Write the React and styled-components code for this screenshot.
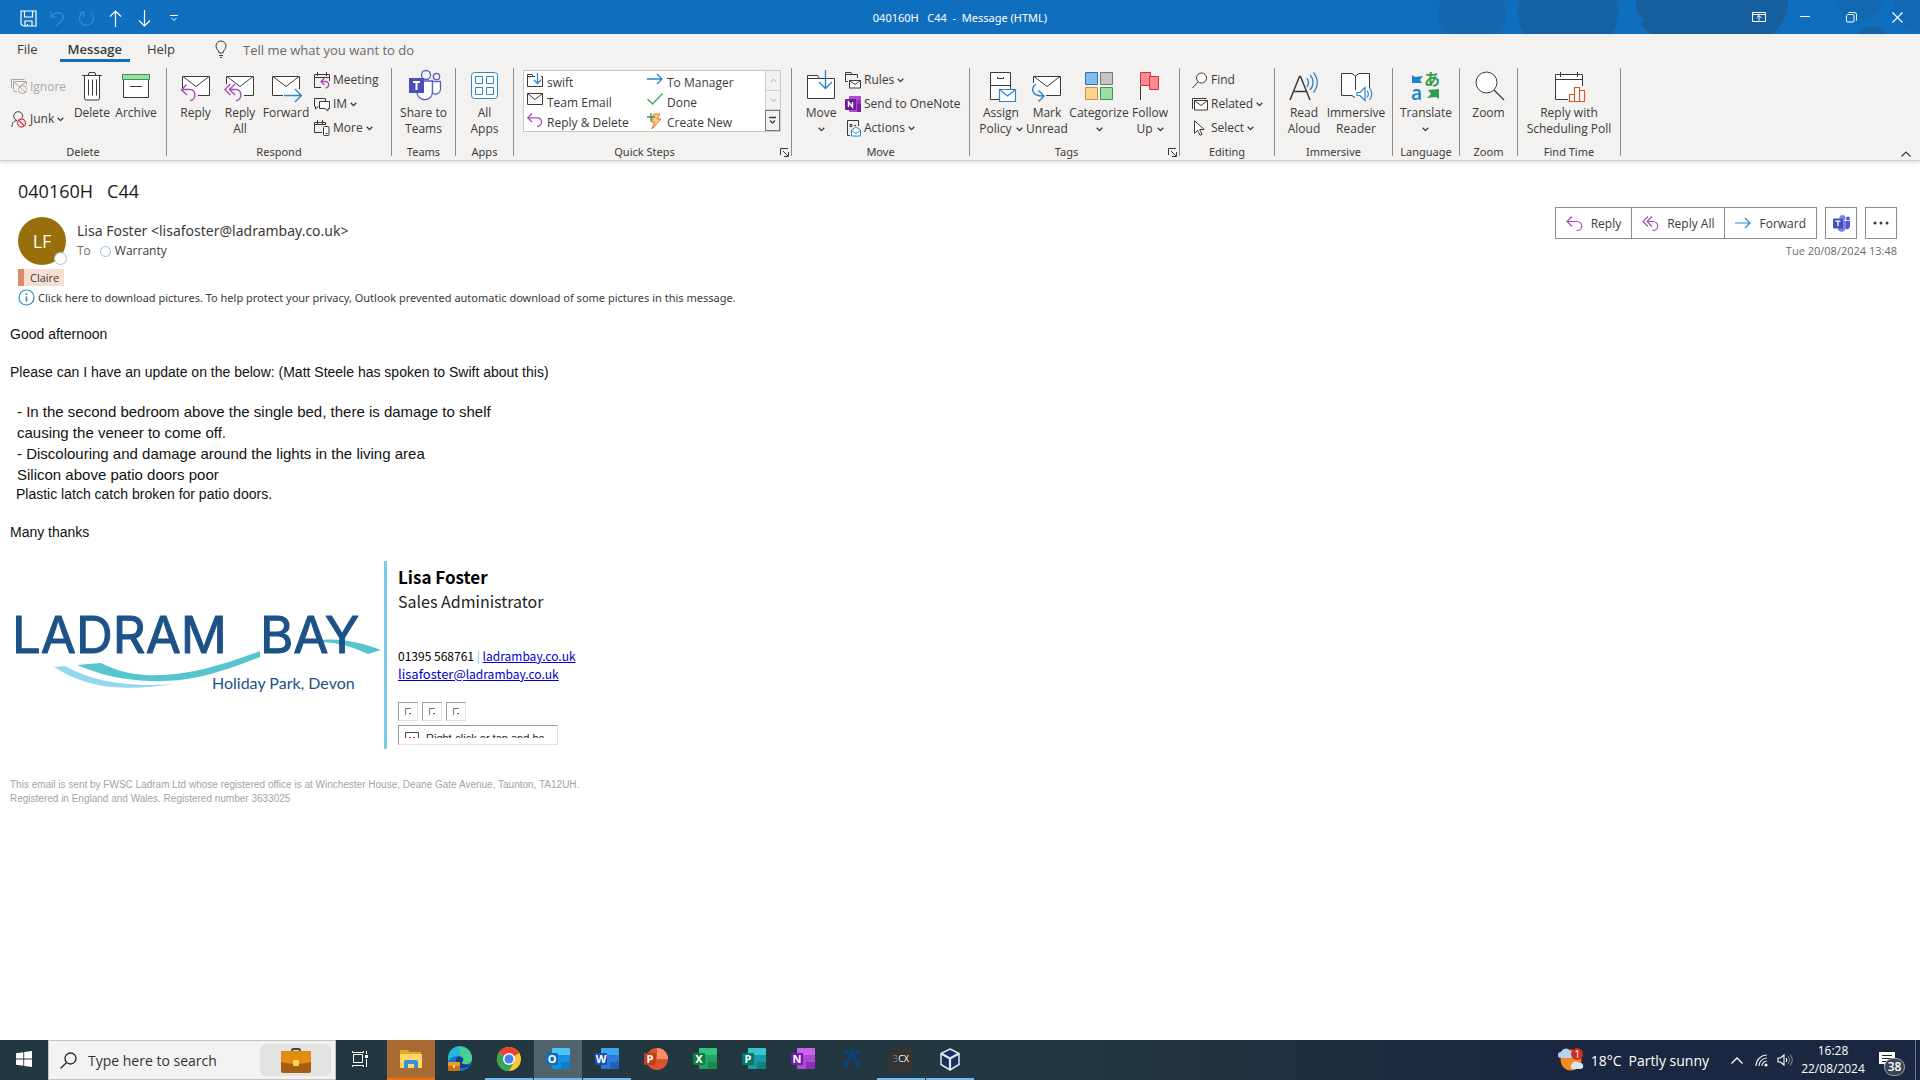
import React from 'react';
import styled, { createGlobalStyle, css } from 'styled-components';

const ui = '"Open Sans", "Noto Sans", sans-serif';
const uiSmall = '"Noto Sans", "Open Sans", sans-serif';
const mail = '"Liberation Sans", Arial, sans-serif';
const sign = '"Noto Sans CJK SC", "Noto Sans", sans-serif';

const Global = createGlobalStyle`
  *, *::before, *::after { box-sizing: border-box; }
  body { margin: 0; background: #fff; color: #3b3a39; font-family: ${ui}; font-size: 12px; }
  button, input { font: inherit; color: inherit; }
  button { background: none; border: 0; padding: 0; margin: 0; cursor: pointer; }
  p, h1, h2 { margin: 0; font-weight: 400; }
  svg { display: block; flex: none; overflow: visible; }
`;

const Window = styled.div`
  display: flex;
  flex-direction: column;
  min-height: 100vh;
`;

/* ---------- icons ---------- */

const ink = '#3b3a39';
const purple = '#a74db5';
const blue = '#2f86c9';

const Icon = ({ w = 16, h = w, box, children, stroke = ink, fill = 'none', sw = 1 }) => (
  <svg width={w} height={h} viewBox={box || `0 0 ${w} ${h}`} fill={fill} stroke={stroke} strokeWidth={sw} aria-hidden="true">
    {children}
  </svg>
);

const Chevron = () => (
  <Icon w={7} h={5} sw={1.3}><path d="M.7.8l2.8 2.8L6.3.8" /></Icon>
);

const icons = {
  save: <Icon w={17} stroke="#fff" sw={1.2}><path d="M1 1h15v15H3l-2-2zM4.500 1v6h8V1M5 16v-5h7v5M7.500 16v-2" /></Icon>,
  undo: <Icon w={17} stroke="#3c8bd0" sw={1.2}><path d="M2 1v6h6M2 7c3-4 8-6 11-3s1 6-6 12" /></Icon>,
  redo: <Icon w={17} stroke="#3c8bd0" sw={1.2}><path d="M1 2h5v5M13 3a7 7 0 1 1-9 0l2-1" /></Icon>,
  up: <Icon w={13} h={17} stroke="#fff" sw={1.2}><path d="M6.500 17V1M1 6.500L6.500 1 12 6.500" /></Icon>,
  down: <Icon w={13} h={17} stroke="#fff" sw={1.2}><path d="M6.500 0v16M1 10.500L6.500 16 12 10.500" /></Icon>,
  more: <Icon w={8} h={7} stroke="#fff"><path d="M0 .5h8M1.500 3L4 5.500 6.500 3" /></Icon>,
  popout: <Icon w={14} h={12} stroke="#fff"><path d="M.5 1.500h13v9H.500zM.5 3.500h13M7 9.500v-5M4.700 6.800L7 4.500l2.300 2.300" /></Icon>,
  min: <Icon w={10} stroke="#fff"><path d="M0 4.500h10" /></Icon>,
  restore: <Icon w={11} stroke="#fff"><rect x=".5" y="2.500" width="7.500" height="7.500" rx="1" /><path d="M2.500.5h6a2 2 0 0 1 2 2v6" /></Icon>,
  close: <Icon w={11} stroke="#fff" sw={1.1}><path d="M.5.5l10 10M10.500.5l-10 10" /></Icon>,
  bulb: <Icon w={12} h={17}><path d="M4 12c0-3-3-3.500-3-7a5 5 0 0 1 10 0c0 3.500-3 4-3 7zM4 14.500h4M5 16.500h2" /></Icon>,

  ignore: <Icon w={16} stroke="#a9a7a5"><path d="M2.500 11V2.500h13V6M.5 9V.5h13M2.500 3l6 4.500L15 3M2.500 12.500H6" /><circle cx="11.500" cy="10.500" r="4" /><path d="M8.700 7.700l5.600 5.600" /></Icon>,
  junk: <Icon w={16} h={17}><path d="M1 16c0-4 2-6.500 5-6.500A4.500 4.500 0 1 1 11.500 6.500" /><circle cx="10.500" cy="12" r="4" stroke="#d9434f" strokeWidth="1.300" /><path d="M7.700 9.200l5.600 5.600" stroke="#d9434f" strokeWidth="1.300" /></Icon>,
  trash: <Icon w={32}><path d="M8.500 5.500h15V28a2 2 0 0 1-2 2h-11a2 2 0 0 1-2-2z" fill="#fff" /><path d="M6 5.500h20M12.500 5.500V4a1.500 1.500 0 0 1 1.500-1.500h4A1.500 1.500 0 0 1 19.500 4v1.500M12.500 9.500v16M16.500 9.500v16M20.500 9.500v16" /></Icon>,
  archive: <Icon w={32}><path d="M3.500 9.500h25v18h-25z" fill="#fff" /><path d="M2.500 4.500h27v5h-27z" fill="#9bdfa8" stroke="#3d9650" /><path d="M10 16.500h12" /></Icon>,
  reply: <Icon w={32}><path d="M2.500 19V6.500h27v19H18" fill="#fff" /><path d="M3 6.500l13 10 13-10" /><path d="M6.500 14.500L1.500 20l5.500 5M2 19.500h8c7 0 6 11 0 11" stroke={purple} strokeWidth="1.400" /></Icon>,
  replyAll: <Icon w={32}><path d="M2.500 14V6.500h27v19H20" fill="#fff" /><path d="M3 6.500l13 10 13-10" /><path d="M6.500 14L1 19.500 6.500 25M11 14l-5.500 5.500L11 25M6 19.500h6c7 0 6 11 0 11" stroke={purple} strokeWidth="1.400" /></Icon>,
  forward: <Icon w={32}><path d="M2.500 25.500v-19h27v15l-2 4z" fill="#fff" stroke="none" /><path d="M13 25.500H2.500v-19h27V19M3 6.500l13 10 13-10" /><path d="M14 25.500h17M25 19l6.300 6.500L25 32" stroke={blue} strokeWidth="1.400" /></Icon>,
  meeting: <Icon w={16} h={17}><path d="M.5 15.500v-13h15V9M.5 5.500h15M3.500 0v4M12.500 0v4M.5 15.500H7" /><path d="M10.500 6L7 9.500l3.500 3.500M7.500 9.500h4c4.500 0 4 6 0 6.500" stroke={purple} strokeWidth="1.300" /></Icon>,
  im: <Icon w={16} h={15}><path d="M5.500 9.500H4.500L1.500 12V9.500h-1v-8h11v3" /><path d="M5.500 4.500h10v7h-1.500V14l-3-2.500H5.500z" fill="#fff" /></Icon>,
  moreSmall: <Icon w={16} h={16}><path d="M8 12.500H.5v-10h11V5M.5 4.500h11M3.500 0v4M8.500 0v4" /><rect x="9.500" y="6.500" width="5.500" height="9" rx="1" fill="#fff" /><path d="M11.500 13.500h2" /></Icon>,
  teams: (
    <Icon w={32} stroke="#5b5fc7" sw={1.3}>
      <circle cx="18" cy="5" r="4.500" /><circle cx="28.500" cy="6.500" r="3.200" />
      <path d="M9 11h15.500v11a7.600 7.600 0 0 1-15.500 0z" fill="#fff" /><path d="M24.500 11.500h8v8a5 5 0 0 1-8 3.500z" fill="#fff" />
      <rect x="1" y="8" width="15" height="15" fill="#4b50b8" stroke="none" /><path d="M5 12h7M8.500 12v8" stroke="#fff" strokeWidth="2" />
    </Icon>
  ),
  apps: <Icon w={32} stroke={blue}><rect x="2.500" y="2.500" width="26" height="26" rx="3" fill="#fff" /><path d="M6.500 6.500h7v7h-7zM17.500 6.500h7v7h-7zM6.500 17.500h7v7h-7zM17.500 17.500h7v7h-7z" /></Icon>,
  qFolder: <Icon w={16} h={16}><path d="M8 3.500H6l-1-2H.5v12h15v-10H14M.5 3.500H6" /><path d="M10.500 0v10M7 7l3.500 3.500L14 7" stroke={blue} strokeWidth="1.300" /></Icon>,
  qMail: <Icon w={16} h={12}><path d="M.5.5h15v11H.500z" fill="#fff" /><path d="M.5.5L8 6.500l7.500-6" /></Icon>,
  qReply: <Icon w={16} h={14} stroke={purple} sw={1.3}><path d="M5 .5L.8 4.800 5 9M1 4.800h9c6 0 6 8.500 0 8.500" /></Icon>,
  qArrow: <Icon w={16} h={12} stroke={blue} sw={1.3}><path d="M0 6h15M10 1l5 5-5 5" /></Icon>,
  qCheck: <Icon w={16} h={12} stroke="#4aa564" sw={1.4}><path d="M.5 6l5 5L15.500.5" /></Icon>,
  qNew: <Icon w={16} h={17} stroke="#e07b1f"><path d="M7 1h6l-3 5h4L5 16l2.500-7H4z" fill="#fbc78d" /><path d="M4 0v8M0 4h8" stroke="#3d9650" strokeWidth="1.300" /></Icon>,
  scrollUp: <Icon w={7} h={5} stroke="#a9a7a5"><path d="M.7 4l2.800-2.800L6.300 4" /></Icon>,
  scrollDown: <Icon w={7} h={5} stroke="#a9a7a5"><path d="M.7.8l2.800 2.800L6.300.8" /></Icon>,
  scrollMore: <Icon w={7} h={8}><path d="M0 .5h7M1 3.500L3.500 6 6 3.500" strokeWidth="1.300" /></Icon>,
  launcher: <Icon w={9}><path d="M.5 7V.5H8M3 3l5 5M8.500 4v4.500H4" /></Icon>,
  move: <Icon w={32}><path d="M2.500 28.500V5.500h10l2 3h15v20z" fill="#fff" /><path d="M2.500 8.500h12" /><path d="M20.500 0v18M14 12l6.500 6.500L27 12" stroke={blue} strokeWidth="1.400" /></Icon>,
  rules: <Icon w={16} h={17}><path d="M3 9.500H.5v-9H6l1 2h5.500V6M.5 2.500H7" /><path d="M4.500 8.500h11v7.500h-11z" fill="#fff" /><path d="M4.500 8.500L10 12.500l5.500-4" /></Icon>,
  onenote: <Icon w={16} stroke="none"><rect x="4" width="12" height="16" rx="1" fill="#ae4bd5" /><path d="M12 4h4v4h-4z" fill="#9332bf" /><path d="M12 8h4v8h-4z" fill="#7719aa" /><rect y="3" width="11" height="11" rx="1" fill="#6b1a9b" /><path d="M3.500 11V6l4 5V6" stroke="#fff" strokeWidth="1.400" /></Icon>,
  actions: <Icon w={16} h={17}><path d="M5 15.500H2.500V.5h11V6" /><path d="M5 4.500h2v2H5zM9 5.500h2" /><path d="M6.500 10l4.500-3 4.500 3v6h-9z" fill="#fff" stroke={blue} /><path d="M6.500 10.500L11 13.500l4.500-3" stroke={blue} /></Icon>,
  policy: <Icon w={32}><path d="M5.500 2.500h20v27h-20z" fill="#fff" /><path d="M5.500 15.500h20M12.500 7v1.500h6V7" /><path d="M14.500 19.500h16v12h-16z" fill="#fff" stroke={blue} strokeWidth="1.200" /><path d="M14.500 19.500l8 6.500 8-6.500" stroke={blue} strokeWidth="1.200" /></Icon>,
  unread: <Icon w={32}><path d="M2.500 6.500h27v19H13L2.500 14z" fill="#fff" stroke="none" /><path d="M2.500 13V6.500h27v19H15M3 6.500l13 10 13-10" /><path d="M5 14c-6 5-4 12 7 12M7.500 20.500l5.500 5.500-5.500 5.500" stroke={blue} strokeWidth="1.400" /></Icon>,
  categorize: <Icon w={32}><path d="M2.500 2.500h12v12h-12z" fill="#83bdee" stroke="#1f74bd" /><path d="M17.500 2.500h12v12h-12z" fill="#c6c5c4" stroke="#7a7876" /><path d="M2.500 17.500h12v12h-12z" fill="#fbd58d" stroke="#d98e2b" /><path d="M17.500 17.500h12v12h-12z" fill="#9bdfa8" stroke="#3d9650" /></Icon>,
  flag: <Icon w={32}><path d="M6.500 16v14" /><path d="M6.500 2.500h10v13h-10z" fill="#fb8a90" stroke="#d13438" /><path d="M15.500 6.500h9v13h-9z" fill="#fb8a90" stroke="#d13438" /></Icon>,
  find: <Icon w={16} h={17}><circle cx="9.500" cy="6" r="5" fill="#fff" /><path d="M6 10L.5 16" /></Icon>,
  related: <Icon w={16} h={13}><path d="M.5 11V.500h14" /><path d="M2.500 2.500h13v9.500h-13z" fill="#fff" /><path d="M2.500 2.500L9 7.500l6.500-5" /></Icon>,
  select: <Icon w={16} h={16}><path d="M2.500.8v12.500l3.200-3 2.300 5 2-1-2.300-4.800h4.500z" fill="#fff" /></Icon>,
  aloud: <Icon w={32}><path d="M2 30L11.500 6.500h1L22 30M5.500 21.500h13" strokeWidth="1.500" /><path d="M19 8c2 3 2 6 0 9M22 5c4 4 4 11 0 15M25.500 2.500c5 6 5 14 0 20" stroke={blue} strokeWidth="1.300" /></Icon>,
  reader: <Icon w={32}><path d="M1.500 3.500h11l3 2.500 3-2.500h11v22h-11l-3 2-3-2h-11z" fill="#fff" stroke="none" /><path d="M29.500 18V3.500H19l-3.500 2.500L12 3.500H1.500v22H12l3 2M15.500 6v14" /><path d="M17 22.500h3l5-5v13l-5-5h-3z" fill="#fff" stroke={blue} strokeWidth="1.200" /><path d="M27 20.500c1.500 2 1.500 5 0 7M29.500 18c3 4 3 8 0 12" stroke={blue} strokeWidth="1.200" /></Icon>,
  translate: (
    <Icon w={32} stroke="none">
      <path d="M2 5l3 2 8-1-3 4 2 3H2z" fill="#1e86c8" /><path d="M29 19v10l-3-2-9 1 4-4-3-4z" fill="#2f9e4f" />
      <text x="1" y="30" fontFamily="Noto Sans" fontWeight="600" fontSize="19" fill="#1e86c8">a</text>
      <text x="14" y="15" fontFamily="Noto Sans CJK JP" fontWeight="700" fontSize="16" fill="#2f9e4f">あ</text>
    </Icon>
  ),
  zoom: <Icon w={32}><circle cx="13.500" cy="12.500" r="10.500" fill="#fff" /><path d="M21 20l10 10" strokeWidth="1.300" /></Icon>,
  poll: <Icon w={32}><path d="M2.500 4.500h27v25h-27z" fill="#fff" stroke="none" /><path d="M15 29.500H2.500v-25h27V16M2.500 9.500h27M7.500 2v5M24.500 2v5" /><path d="M16.500 24.500h5v7h-5zM21.500 17.500h5v14h-5zM26.500 20.500h5v11h-5z" fill="#fff" stroke="#d9532c" strokeWidth="1.200" /></Icon>,
  collapse: <Icon w={10} h={6} sw={1.2}><path d="M.5 5.500L5 1l4.500 4.500" /></Icon>,

  hReply: <Icon w={17} h={15} stroke={purple} sw={1.2}><path d="M6 .5L1 5.500l5 5M1 5.500h9.500c7 0 7 9 0 9" /></Icon>,
  hReplyAll: <Icon w={17} h={15} stroke={purple} sw={1.2}><path d="M6 .5L1 5.500l5 5M10 .5L5 5.500l5 5M5 5.500h5.500c7 0 7 9 0 9" /></Icon>,
  hForward: <Icon w={16} h={12} stroke={blue} sw={1.2}><path d="M0 6h15M10 1l5 5-5 5" /></Icon>,
  hTeams: <Icon w={17} h={16} stroke="none"><circle cx="9.500" cy="3" r="3" fill="#7b83eb" /><circle cx="15" cy="3.500" r="2" fill="#5059c9" /><path d="M5 6h8v6a4.500 4.500 0 0 1-8 3z" fill="#7b83eb" /><path d="M13 6h4v5a3 3 0 0 1-4 3z" fill="#5059c9" /><rect y="3.500" width="10" height="10" rx="1" fill="#464eb8" /><path d="M2.500 6.200h5M5 6.200v5" stroke="#fff" strokeWidth="1.300" /></Icon>,
  dots: <Icon w={16} h={4} stroke="none" fill={ink}><circle cx="2" cy="2" r="1.500" /><circle cx="8" cy="2" r="1.500" /><circle cx="14" cy="2" r="1.500" /></Icon>,
  info: <Icon w={17} stroke="#2f8fc4" sw={1.2}><circle cx="8.500" cy="8.500" r="7.500" /><path d="M8.500 7.500v5M8.500 4.200v1.800" strokeWidth="1.700" /></Icon>,

  windows: <Icon w={16} stroke="none" fill="#fff"><path d="M0 2.300L7.300 1.200v6.300H0zM8.200 1L16 0v7.500H8.200zM0 8.400h7.300v6.400L0 13.800zM8.200 8.400H16V16l-7.800-1.100z" /></Icon>,
  search: <Icon w={17} h={17} stroke="#222" sw={1.3}><circle cx="10.500" cy="6.500" r="5.500" /><path d="M6.500 10.500L.5 16.500" /></Icon>,
  briefcase: (
    <Icon w={30} h={25} stroke="none">
      <path d="M11 4V2.500A1.500 1.500 0 0 1 12.500 1h5A1.500 1.500 0 0 1 19 2.500V4" stroke="#44403c" strokeWidth="2" />
      <rect y="3" width="30" height="22" rx="2" fill="#a65f12" /><path d="M0 5a2 2 0 0 1 2-2h26a2 2 0 0 1 2 2v9q-15 4-30 0z" fill="#e08d12" />
      <rect x="12" y="12" width="6" height="6" rx="1" fill="#ffd54a" />
    </Icon>
  ),
  taskview: <Icon w={16} stroke="#fff"><path d="M1.500 3.500h9v8h-9zM.5 0v1.500h11V0M.5 16v-1.500h11V16M14.500 0v3M14.500 8v8" /><rect x="13.500" y="4.500" width="2" height="2" fill="#fff" /></Icon>,
  explorer: <Icon w={22} h={18} stroke="none"><path d="M0 1a1 1 0 0 1 1-1h7l2 2h11v16H0z" fill="#e8a81f" /><path d="M0 4h22v14H0z" fill="#ffd868" /><path d="M4 18v-6a2 2 0 0 1 2-2h10a2 2 0 0 1 2 2v6h-4v-4H8v4z" fill="#3b8ede" /></Icon>,
  edge: (
    <Icon w={24} h={24} stroke="none">
      <circle cx="12" cy="12" r="12" fill="#1573c9" />
      <path d="M0 11A12 12 0 0 1 24 11c0 5-4 7-9 6-2-1-1-2 0-3 1-3-2-5-6-5-4 0-8 3-9 6z" fill="#2bb5d8" />
      <path d="M12 0a12 12 0 0 1 12 11c0 5-4 7-9 6-2-1-1-2 0-3 1-3 0-5-3-7z" fill="#4bcf8c" />
      <path d="M8 13c0-3 3-4 5-3 2 1 3 2 2 4-1 1-2 2 0 3 3 1 5 1 7 0-3 6-14 6-14-4z" fill="#123f80" />
      <rect y="15" width="12" height="9" rx="1" fill="#c76f13" /><rect y="15" width="12" height="4" rx="1" fill="#f09a26" /><rect x="5" y="18" width="2" height="3" fill="#ffe08a" />
    </Icon>
  ),
  chrome: (
    <Icon w={24} h={24} stroke="none">
      <circle cx="12" cy="12" r="12" fill="#fcc934" /><path d="M12 12L1.600 6A12 12 0 0 1 22.400 6z" fill="#ea4335" /><path d="M1.600 6A12 12 0 0 0 12 24l5.200-9L12 12z" fill="#34a853" />
      <circle cx="12" cy="12" r="6" fill="#fff" /><circle cx="12" cy="12" r="4.500" fill="#4285f4" />
    </Icon>
  ),
  jira: <Icon w={18} h={24} stroke="#14406f" sw={4.5}><path d="M2 3c1 5 13 6 14 18M16 3C15 8 3 9 2 21" /><circle cx="9" cy="4" r="1.500" fill="#14406f" strokeWidth="2" /></Icon>,
  vbox: <Icon w={20} h={23} stroke="#dfe7f2" sw={1.5}><path d="M10 1l9 4.500v11L10 22l-9-5.500v-11z" fill="#16305c" /><path d="M1 5.500l9 5 9-5M10 10.500V22" strokeWidth="2.200" /></Icon>,
  weather: (
    <Icon w={25} h={24} stroke="none">
      <circle cx="12" cy="12" r="10.500" fill="#f58a1f" /><path d="M2 10a3 3 0 0 1 0-6 5 5 0 0 1 9-1 4 4 0 0 1 2 7z" fill="#b7d3f3" />
      <path d="M13 21a3 3 0 0 1 0-5 4 4 0 0 1 7-1 3 3 0 0 1 2 6z" fill="#d5e4f8" /><circle cx="18" cy="6" r="6" fill="#d02a24" />
      <text x="15.500" y="10" fontFamily="Noto Sans" fontSize="10" fill="#fff">1</text>
    </Icon>
  ),
  trayUp: <Icon w={12} h={7} stroke="#fff" sw={1.3}><path d="M.5 6.500L6 1l5.500 5.500" /></Icon>,
  wifi: <Icon w={13} stroke="#dfe3ea" sw={1.2}><path d="M1 12A11 11 0 0 1 12 1M4 12a8 8 0 0 1 8-8M7 12a5 5 0 0 1 5-5" /><circle cx="11" cy="11" r="1.500" fill="#fff" stroke="none" /></Icon>,
  speaker: <Icon w={16} h={14} stroke="#fff" sw={1.1}><path d="M1 5h2.500L7 2v10L3.500 9H1z" /><path d="M9 5c1 1.200 1 2.800 0 4" /><path d="M11 3c2 2.500 2 5.500 0 8M13 1.500c3 3.500 3 7.500 0 11" stroke="#76809a" /></Icon>,
  note: <Icon w={16} h={16} stroke="none"><path d="M0 0h16v12H8l-3 4v-4H0z" fill="#fff" /><path d="M3 3.500h10M3 6.500h10M3 9.500h5" stroke="#1b2740" /></Icon>,
};

const OfficeTile = ({ letter, dark, mid, light, round }) => (
  <Icon w={24} h={22} stroke="none">
    {round ? <circle cx="13" cy="11" r="11" fill={mid} /> : <rect x="6" y="0" width="18" height="21" rx="1" fill={mid} />}
    {round ? <path d="M13 0a11 11 0 0 1 11 11H13z" fill={light} /> : <path d="M7 0h16a1 1 0 0 1 1 1v6H6V1a1 1 0 0 1 1-1z" fill={light} />}
    {!round && <path d="M15 14h9v6a1 1 0 0 1-1 1h-8z" fill={dark} opacity=".6" />}
    <rect x="0" y="5" width="12" height="12" rx="1" fill={dark} />
    <text x="6" y="15" textAnchor="middle" fontFamily="Noto Sans" fontWeight="700" fontSize="11" fill="#fff">{letter}</text>
  </Icon>
);

/* ---------- title bar ---------- */

const TitleBar = styled.header`
  position: relative;
  display: grid;
  grid-template-columns: 1fr auto 1fr;
  align-items: center;
  height: 34px;
  background: #106ebe;
  color: #fff;
`;
const Artwork = styled.svg`
  position: absolute;
  top: 0;
  right: 0;
  overflow: hidden;
`;
const QuickAccess = styled.div`
  display: flex;
  align-items: center;
  padding: 2px 0 0 14px;
`;
const TitleButton = styled.button`
  display: grid;
  place-items: center;
  width: 29px;
  height: 28px;
`;
const WindowTitle = styled.h1`
  font-family: ${uiSmall};
  font-size: 11px;
  line-height: 16px;
  white-space: pre;
  padding-top: 1px;
`;
const Controls = styled.div`
  position: relative;
  display: flex;
  justify-content: flex-end;
`;
const ControlButton = styled(TitleButton)`
  width: 46px;
  height: 32px;
`;

/* ---------- ribbon ---------- */

const Ribbon = styled.div`
  background: #f3f2f1;
  border-bottom: 1px solid #d2d0ce;
  box-shadow: 0 1px 4px rgba(0, 0, 0, 0.16);
`;
const Tabs = styled.nav`
  display: flex;
  align-items: flex-start;
  height: 34px;
  padding-left: 9px;
`;
const Tab = styled.button`
  height: 28px;
  padding: 5px 8px 0;
  margin-right: ${(p) => (p.$active ? 9 : 14)}px;
  border-bottom: 3px solid ${(p) => (p.$active ? '#106ebe' : 'transparent')};
  font-size: 13px;
  font-weight: ${(p) => (p.$active ? 600 : 400)};
  line-height: 18px;
`;
const TellMe = styled.label`
  display: flex;
  align-items: center;
  gap: 16px;
  height: 31px;
  margin-left: 18px;
`;
const TellInput = styled.input`
  width: 220px;
  padding: 0;
  border: 0;
  outline: 0;
  background: none;
  font-size: 13px;
  &::placeholder { color: #6c6a68; opacity: 1; }
`;
const Groups = styled.div`
  display: flex;
  position: relative;
  height: 92px;
`;
const Group = styled.section`
  display: flex;
  flex-direction: column;
  flex: none;
  width: ${(p) => p.$width}px;
`;
const Tools = styled.div`
  display: flex;
  flex: 1;
  padding-left: ${(p) => p.$pad || 0}px;
  justify-content: ${(p) => (p.$center ? 'center' : 'flex-start')};
`;
const Divider = styled.div`
  flex: none;
  width: 1px;
  height: 88px;
  background: #8f8d8b;
`;
const GroupFoot = styled.div`
  display: flex;
  align-items: center;
  height: 16px;
`;
const GroupName = styled.h2`
  flex: 1;
  font-family: ${uiSmall};
  font-size: 11px;
  line-height: 16px;
  text-align: center;
`;
const Big = styled.button`
  display: flex;
  flex-direction: column;
  align-items: center;
  gap: 3px;
  width: ${(p) => p.$width}px;
  height: 72px;
  padding-top: 2px;
  font-size: 12px;
  line-height: 16px;
  white-space: nowrap;
`;
const Line = styled.span`
  display: flex;
  align-items: center;
  justify-content: center;
  gap: 4px;
  height: 16px;
`;
const SmallColumn = styled.div`
  display: flex;
  flex-direction: column;
  padding: ${(p) => (p.$tall ? '3px 0 0 3px' : '0 0 0 4px')};
  width: ${(p) => (p.$width ? `${p.$width}px` : 'auto')};
`;
const Small = styled.button`
  display: flex;
  align-items: center;
  gap: 3px;
  height: ${(p) => (p.$tall ? 32 : 24)}px;
  font-size: 12px;
  line-height: 16px;
  white-space: nowrap;
  color: ${(p) => (p.disabled ? '#a9a7a5' : 'inherit')};
`;
const SmallIcon = styled.span`
  display: grid;
  place-items: center;
  width: 16px;
`;
const Gallery = styled.div`
  display: flex;
  width: 258px;
  height: 62px;
  margin-top: 2px;
  background: #fff;
  border: 1px solid #c8c6c4;
`;
const Steps = styled.div`
  display: grid;
  flex: 1;
  grid-template-columns: 120px 1fr;
  grid-template-rows: repeat(3, 20px);
  padding-left: 3px;
`;
const Step = styled(Small)`
  align-items: flex-start;
  height: 20px;
  gap: 4px;
  line-height: 20px;
  padding-top: 2px;
`;
const Scroller = styled.div`
  display: grid;
  grid-template-rows: 20px 19px 21px;
  width: 15px;
  background: #f3f2f1;
`;
const ScrollButton = styled.button`
  display: grid;
  place-items: center;
  border: solid ${(p) => (p.$strong ? '#7a7876' : '#d2d0ce')};
  border-width: ${(p) => (p.$strong ? '1px' : '0 0 1px 1px')};
`;
const Launcher = styled.button`
  margin: 0 2px 0 5px;
`;
const Collapse = styled.button`
  margin: auto 9px 3px auto;
`;

/* ---------- message header ---------- */

const Reading = styled.main`
  flex: 1;
  padding: 18px 23px 24px 10px;
`;
const Subject = styled.h2`
  padding-left: 8px;
  color: #1b1a19;
  font-size: 18px;
  line-height: 24px;
  white-space: pre;
`;
const HeadRow = styled.div`
  display: flex;
  justify-content: space-between;
  padding: 4px 0 0 8px;
`;
const Sender = styled.div`
  display: flex;
  gap: 11px;
  padding-top: 10px;
`;
const Avatar = styled.div`
  position: relative;
  width: 48px;
  height: 48px;
  border-radius: 50%;
  background: #986f0b;
  color: #fff;
  font-size: 18px;
  line-height: 48px;
  text-align: center;
`;
const Presence = styled.span`
  display: inline-block;
  width: 11px;
  height: 11px;
  border: 1px solid #9fc0cf;
  border-radius: 50%;
  background: #fff;
`;
const AvatarPresence = styled(Presence)`
  position: absolute;
  right: -1px;
  bottom: 0;
  width: 13px;
  height: 13px;
`;
const From = styled.p`
  font-family: ${uiSmall};
  font-size: 14px;
  line-height: 28px;
`;
const To = styled.p`
  display: flex;
  align-items: center;
  gap: 4px;
  font-size: 12px;
  line-height: 12px;
`;
const ToLabel = styled.span`
  margin-right: 5px;
  color: #6c6a68;
`;
const Actions = styled.div`
  display: flex;
  gap: 8px;
`;
const ReplySet = styled.div`
  display: flex;
  border: 1px solid #8f8d8b;
  height: 32px;
  button + button { border-left: 1px solid #8f8d8b; }
`;
const ReplyButton = styled.button`
  display: flex;
  align-items: center;
  gap: 8px;
  padding: 0 10px;
  font-size: 12px;
`;
const SquareButton = styled.button`
  display: grid;
  place-items: center;
  width: 32px;
  height: 32px;
  border: 1px solid #8f8d8b;
`;
const Sent = styled.p`
  padding-top: 4px;
  color: #6c6a68;
  font-size: 11px;
  line-height: 16px;
  text-align: right;
`;
const Category = styled.span`
  display: block;
  width: max-content;
  margin: 4px 0 0 8px;
  padding: 0 5px 0 6px;
  border-left: 6px solid #dd8b66;
  background: #f6ddd1;
  font-size: 11px;
  line-height: 17px;
`;
const InfoBar = styled.button`
  display: flex;
  align-items: center;
  gap: 3px;
  margin: 3px 0 0 8px;
  font-family: ${uiSmall};
  font-size: 11px;
  line-height: 17px;
`;

/* ---------- message body ---------- */

const Body = styled.article`
  padding-top: 19px;
  color: #111;
  font-family: ${mail};
`;
const Para = styled.p`
  font-size: 14px;
  line-height: 19px;
  margin-bottom: 19px;
  padding-left: ${(p) => p.$indent || 0}px;
`;
const Notes = styled.p`
  padding-left: 7px;
  font-size: 15px;
  line-height: 21px;
`;
const Signature = styled.section`
  display: flex;
  margin-bottom: 29px;
`;
const Brand = styled.svg`
  margin-top: 34px;
`;
const Contact = styled.div`
  height: 188px;
  padding: 4px 0 0 11px;
  border-left: 3px solid #7ccbe8;
  font-family: ${sign};
  color: #222;
`;
const Name = styled.p`
  color: #000;
  font-size: 17px;
  font-weight: 700;
  line-height: 24px;
`;
const Role = styled.p`
  font-size: 16px;
  line-height: 24px;
  margin-bottom: 34px;
`;
const Phone = styled.p`
  color: #000;
  font-size: 12px;
  line-height: 18px;
`;
const Bar = styled.span`
  color: #7ccbe8;
`;
const Link = styled.a`
  color: #0000d4;
  font-size: ${(p) => p.$size || 12}px;
`;
const Blocked = styled.div`
  display: flex;
  gap: 4px;
  margin: 19px 0 4px;
`;
const Missing = styled.span`
  display: grid;
  place-items: center;
  width: 20px;
  height: 19px;
  border: 1px solid #e3e3e3;
  border-top-color: #9a9a9a;
  border-left-color: #9a9a9a;
`;
const MissingWide = styled.div`
  width: 160px;
  height: 20px;
  padding: 6px 6px;
  border: 1px solid #e3e3e3;
  border-top-color: #9a9a9a;
  border-left-color: #9a9a9a;
`;
const Clip = styled.div`
  display: flex;
  gap: 7px;
  height: 6px;
  overflow: hidden;
  font-family: ${mail};
  font-size: 11px;
  line-height: 12px;
  white-space: nowrap;
`;
const Legal = styled.p`
  color: #a3a3a3;
  font-size: 10px;
  line-height: 14px;
`;

/* ---------- taskbar ---------- */

const Taskbar = styled.footer`
  display: flex;
  height: 40px;
  background: linear-gradient(90deg, #22373f 0%, #22373f 55%, #1b2740 80%);
  color: #fff;
`;
const TaskButton = styled.button`
  display: grid;
  place-items: center;
  width: 48px;
  height: 40px;
  border-bottom: 2px solid transparent;
  ${(p) => p.$running && css`border-bottom-color: #76b9ed;`}
  ${(p) => p.$active && css`background: #52646b;`}
  ${(p) => p.$alert && css`background: #aa6a35; border-bottom-color: #f2700c;`}
`;
const Search = styled.label`
  display: flex;
  align-items: center;
  width: 288px;
  padding: 0 4px 0 11px;
  border: 1px solid #c4c4c4;
  background: #f2f2f2;
`;
const SearchInput = styled.input`
  flex: 1;
  min-width: 0;
  margin-left: 11px;
  padding: 0;
  border: 0;
  outline: 0;
  background: none;
  font-size: 14px;
  &::placeholder { color: #333; opacity: 1; }
`;
const Highlight = styled.span`
  display: grid;
  place-items: center;
  width: 71px;
  height: 32px;
  border-radius: 6px;
  background: #e3e3e3;
`;
const Tasks = styled.div`
  display: flex;
  gap: 1px;
  margin-left: 3px;
`;
const ThreeCx = styled.span`
  width: 24px;
  height: 24px;
  background: #36322f;
  color: #fff;
  font-size: 9px;
  line-height: 24px;
  text-align: center;
`;
const Teal = styled.span`
  color: #2e9cb8;
`;
const Tray = styled.div`
  display: flex;
  align-items: center;
  margin-left: auto;
`;
const Weather = styled.button`
  display: flex;
  align-items: center;
  gap: 7px;
  margin-right: 16px;
  font-size: 14px;
`;
const TrayButton = styled.button`
  display: grid;
  place-items: center;
  width: 24px;
  height: 40px;
`;
const Clock = styled.button`
  width: 72px;
  font-size: 12px;
  line-height: 18px;
  text-align: center;
`;
const Notices = styled.button`
  position: relative;
  display: flex;
  align-items: center;
  width: 47px;
  height: 40px;
  padding-left: 10px;
  border-right: 1px solid #6b7488;
  margin-right: 4px;
`;
const Badge = styled.span`
  position: absolute;
  left: 15px;
  top: 18px;
  width: 21px;
  height: 18px;
  border: 1px solid #9aa0ab;
  border-radius: 9px;
  background: #3b4354;
  font-size: 12px;
  font-weight: 600;
  line-height: 16px;
  text-align: center;
`;

/* ---------- parts ---------- */

const BigTool = ({ icon, lines, width }) => (
  <Big $width={width}>
    {icons[icon]}
    <span>
      {lines.map((l) => (
        <Line key={l}>{l.replace('▾', '')}{l.endsWith('▾') && <Chevron />}</Line>
      ))}
    </span>
  </Big>
);

const SmallTool = ({ icon, label, menu, tall, disabled }) => (
  <Small $tall={tall} disabled={disabled}>
    <SmallIcon>{icons[icon]}</SmallIcon>{label}{menu && <Chevron />}
  </Small>
);

const RibbonGroup = ({ name, width, pad, center, launcher, children }) => (
  <>
    <Group $width={width}>
      <Tools $pad={pad} $center={center}>{children}</Tools>
      <GroupFoot>
        <GroupName>{name}</GroupName>
        {launcher && <Launcher aria-label={`${name} options`}>{icons.launcher}</Launcher>}
      </GroupFoot>
    </Group>
    <Divider />
  </>
);

const steps = [
  ['qFolder', 'swift'], ['qArrow', 'To Manager'],
  ['qMail', 'Team Email'], ['qCheck', 'Done'],
  ['qReply', 'Reply & Delete'], ['qNew', 'Create New'],
];

const MissingMark = () => (
  <Icon w={7} h={7} stroke="#777"><path d="M.5 7V.5H6" /><path d="M4 5.500h2" stroke="#c33" /></Icon>
);

export default function App() {
  return (
    <Window>
      <Global />
      <TitleBar>
        <Artwork width="500" height="34" viewBox="0 0 500 34" aria-hidden="true">
          <g fill="#17609f">
            <circle cx="52" cy="14" r="34" opacity=".5" /><circle cx="148" cy="10" r="50" opacity=".75" />
            <path d="M216 0h152c0 16-6 26-16 34H232c-6-4-14-8-8-14-6-6-10-12-8-20z" />
            <circle cx="440" cy="-6" r="26" opacity=".35" /><circle cx="452" cy="40" r="14" opacity=".7" /><circle cx="500" cy="6" r="26" opacity=".4" />
          </g>
        </Artwork>
        <QuickAccess>
          <TitleButton aria-label="Save">{icons.save}</TitleButton>
          <TitleButton aria-label="Undo">{icons.undo}</TitleButton>
          <TitleButton aria-label="Redo">{icons.redo}</TitleButton>
          <TitleButton aria-label="Previous item">{icons.up}</TitleButton>
          <TitleButton aria-label="Next item">{icons.down}</TitleButton>
          <TitleButton aria-label="Customize toolbar">{icons.more}</TitleButton>
        </QuickAccess>
        <WindowTitle>{'040160H   C44  -  Message (HTML)'}</WindowTitle>
        <Controls>
          <ControlButton aria-label="Ribbon display">{icons.popout}</ControlButton>
          <ControlButton aria-label="Minimize">{icons.min}</ControlButton>
          <ControlButton aria-label="Restore">{icons.restore}</ControlButton>
          <ControlButton aria-label="Close">{icons.close}</ControlButton>
        </Controls>
      </TitleBar>

      <Ribbon>
        <Tabs>
          <Tab>File</Tab>
          <Tab $active>Message</Tab>
          <Tab>Help</Tab>
          <TellMe>
            {icons.bulb}
            <TellInput placeholder="Tell me what you want to do" aria-label="Tell me what you want to do" />
          </TellMe>
        </Tabs>
        <Groups>
          <RibbonGroup name="Delete" width={166} pad={8}>
            <SmallColumn $tall $width={62}>
              <SmallTool icon="ignore" label="Ignore" tall disabled />
              <SmallTool icon="junk" label="Junk" menu tall />
            </SmallColumn>
            <BigTool icon="trash" lines={['Delete']} width={44} />
            <BigTool icon="archive" lines={['Archive']} width={44} />
          </RibbonGroup>
          <RibbonGroup name="Respond" width={224} pad={6}>
            <BigTool icon="reply" lines={['Reply']} width={45} />
            <BigTool icon="replyAll" lines={['Reply', 'All']} width={44} />
            <BigTool icon="forward" lines={['Forward']} width={48} />
            <SmallColumn>
              <SmallTool icon="meeting" label="Meeting" />
              <SmallTool icon="im" label="IM" menu />
              <SmallTool icon="moreSmall" label="More" menu />
            </SmallColumn>
          </RibbonGroup>
          <RibbonGroup name="Teams" width={63} center>
            <BigTool icon="teams" lines={['Share to', 'Teams']} width={56} />
          </RibbonGroup>
          <RibbonGroup name="Apps" width={57} center>
            <BigTool icon="apps" lines={['All', 'Apps']} width={44} />
          </RibbonGroup>
          <RibbonGroup name="Quick Steps" width={277} pad={9} launcher>
            <Gallery>
              <Steps>
                {steps.map(([icon, label]) => (
                  <Step key={label}><SmallIcon>{icons[icon]}</SmallIcon>{label}</Step>
                ))}
              </Steps>
              <Scroller>
                <ScrollButton aria-label="Scroll up">{icons.scrollUp}</ScrollButton>
                <ScrollButton aria-label="Scroll down">{icons.scrollDown}</ScrollButton>
                <ScrollButton $strong aria-label="More steps">{icons.scrollMore}</ScrollButton>
              </Scroller>
            </Gallery>
          </RibbonGroup>
          <RibbonGroup name="Move" width={177} pad={9}>
            <BigTool icon="move" lines={['Move', '▾']} width={40} />
            <SmallColumn>
              <SmallTool icon="rules" label="Rules" menu />
              <SmallTool icon="onenote" label="Send to OneNote" />
              <SmallTool icon="actions" label="Actions" menu />
            </SmallColumn>
          </RibbonGroup>
          <RibbonGroup name="Tags" width={209} pad={8} launcher>
            <BigTool icon="policy" lines={['Assign', 'Policy▾']} width={46} />
            <BigTool icon="unread" lines={['Mark', 'Unread']} width={46} />
            <BigTool icon="categorize" lines={['Categorize', '▾']} width={58} />
            <BigTool icon="flag" lines={['Follow', 'Up▾']} width={44} />
          </RibbonGroup>
          <RibbonGroup name="Editing" width={94} pad={8}>
            <SmallColumn>
              <SmallTool icon="find" label="Find" />
              <SmallTool icon="related" label="Related" menu />
              <SmallTool icon="select" label="Select" menu />
            </SmallColumn>
          </RibbonGroup>
          <RibbonGroup name="Immersive" width={117} pad={6}>
            <BigTool icon="aloud" lines={['Read', 'Aloud']} width={46} />
            <BigTool icon="reader" lines={['Immersive', 'Reader']} width={58} />
          </RibbonGroup>
          <RibbonGroup name="Language" width={66} center>
            <BigTool icon="translate" lines={['Translate', '▾']} width={56} />
          </RibbonGroup>
          <RibbonGroup name="Zoom" width={57} center>
            <BigTool icon="zoom" lines={['Zoom']} width={44} />
          </RibbonGroup>
          <RibbonGroup name="Find Time" width={102} center>
            <BigTool icon="poll" lines={['Reply with', 'Scheduling Poll']} width={94} />
          </RibbonGroup>
          <Collapse aria-label="Collapse the ribbon">{icons.collapse}</Collapse>
        </Groups>
      </Ribbon>

      <Reading>
        <Subject>{'040160H   C44'}</Subject>
        <HeadRow>
          <Sender>
            <Avatar>LF<AvatarPresence /></Avatar>
            <div>
              <From>Lisa Foster &lt;lisafoster@ladrambay.co.uk&gt;</From>
              <To><ToLabel>To</ToLabel><Presence />Warranty</To>
            </div>
          </Sender>
          <div>
            <Actions>
              <ReplySet>
                <ReplyButton>{icons.hReply}Reply</ReplyButton>
                <ReplyButton>{icons.hReplyAll}Reply All</ReplyButton>
                <ReplyButton>{icons.hForward}Forward</ReplyButton>
              </ReplySet>
              <SquareButton aria-label="Share to Teams">{icons.hTeams}</SquareButton>
              <SquareButton aria-label="More actions">{icons.dots}</SquareButton>
            </Actions>
            <Sent>Tue 20/08/2024 13:48</Sent>
          </div>
        </HeadRow>
        <Category>Claire</Category>
        <InfoBar>
          {icons.info}
          Click here to download pictures. To help protect your privacy, Outlook prevented automatic download of some pictures in this message.
        </InfoBar>

        <Body>
          <Para>Good afternoon</Para>
          <Para>Please can I have an update on the below: (Matt Steele has spoken to Swift about this)</Para>
          <Notes>
            - In the second bedroom above the single bed, there is damage to shelf<br />
            causing the veneer to come off.<br />
            - Discolouring and damage around the lights in the living area<br />
            Silicon above patio doors poor
          </Notes>
          <Para $indent={6}>Plastic latch catch broken for patio doors.</Para>
          <Para>Many thanks</Para>

          <Signature>
            <Brand width="374" height="110" viewBox="10 595 374 110" role="img" aria-label="Ladram Bay Holiday Park, Devon">
              <path d="M77 665l24-2c45 24 104 9 159-12v6c-55 22-80 25-110 24-26-1-50-6-73-16z" fill="#55c5cf" />
              <path d="M54 667l11-1c30 17 66 21 110 18-50 7-85 6-121-17z" fill="#93d6f2" />
              <path d="M304 642c30-6 54-1 77 8l-13 4c-22-10-38-13-64-12z" fill="#55c5cf" />
              <g fontFamily="Inter" fontSize="51" fontWeight="400" fill="#1d5288" stroke="#1d5288" strokeWidth="1" strokeLinejoin="round">
                <text x="12" y="653">LADRAM</text>
                <text x="260" y="653">BAY</text>
              </g>
              <text x="212" y="689" fontFamily="Lato" fontSize="16" fill="#1d5288">Holiday Park, Devon</text>
            </Brand>
            <Contact>
              <Name>Lisa Foster</Name>
              <Role>Sales Administrator</Role>
              <Phone>01395 568761 <Bar>|</Bar> <Link href="#site">ladrambay.co.uk</Link></Phone>
              <Phone><Link href="#mail" $size={13}>lisafoster@</Link><Link href="#mail">ladrambay.co.uk</Link></Phone>
              <Blocked>
                <Missing><MissingMark /></Missing>
                <Missing><MissingMark /></Missing>
                <Missing><MissingMark /></Missing>
              </Blocked>
              <MissingWide>
                <Clip>
                  <Icon w={14} h={12} stroke="#444"><path d="M.5 12V.5h13V12" /><path d="M4 5.500h2M8 5.500h2" stroke="#c33" /></Icon>
                  Right-click or tap and ho
                </Clip>
              </MissingWide>
            </Contact>
          </Signature>
          <Legal>
            This email is sent by FWSC Ladram Ltd whose registered office is at Winchester House, Deane Gate Avenue, Taunton, TA12UH.<br />
            Registered in England and Wales. Registered number 3633025
          </Legal>
        </Body>
      </Reading>

      <Taskbar>
        <TaskButton aria-label="Start">{icons.windows}</TaskButton>
        <Search>
          {icons.search}
          <SearchInput placeholder="Type here to search" aria-label="Type here to search" />
          <Highlight>{icons.briefcase}</Highlight>
        </Search>
        <TaskButton aria-label="Task view">{icons.taskview}</TaskButton>
        <Tasks>
          <TaskButton $alert aria-label="File Explorer">{icons.explorer}</TaskButton>
          <TaskButton aria-label="Edge">{icons.edge}</TaskButton>
          <TaskButton $running aria-label="Chrome">{icons.chrome}</TaskButton>
          <TaskButton $running $active aria-label="Outlook"><OfficeTile letter="O" dark="#0f6cbd" mid="#1490df" light="#50c3f5" /></TaskButton>
          <TaskButton $running aria-label="Word"><OfficeTile letter="W" dark="#1a50b0" mid="#2b7cd3" light="#41a5ee" /></TaskButton>
          <TaskButton aria-label="PowerPoint"><OfficeTile letter="P" dark="#c43e1c" mid="#d9532c" light="#ff8f6b" round /></TaskButton>
          <TaskButton aria-label="Excel"><OfficeTile letter="X" dark="#107c41" mid="#21a366" light="#33c481" /></TaskButton>
          <TaskButton aria-label="Publisher"><OfficeTile letter="P" dark="#077568" mid="#1a9ba1" light="#37c6d0" /></TaskButton>
          <TaskButton aria-label="OneNote"><OfficeTile letter="N" dark="#7719aa" mid="#ae4bd5" light="#ca64ea" /></TaskButton>
          <TaskButton aria-label="Jira">{icons.jira}</TaskButton>
          <TaskButton $running aria-label="3CX"><ThreeCx><Teal>3</Teal>CX</ThreeCx></TaskButton>
          <TaskButton $running aria-label="VirtualBox">{icons.vbox}</TaskButton>
        </Tasks>
        <Tray>
          <Weather>{icons.weather}<span>18°C</span><span>Partly sunny</span></Weather>
          <TrayButton aria-label="Hidden icons">{icons.trayUp}</TrayButton>
          <TrayButton aria-label="Network">{icons.wifi}</TrayButton>
          <TrayButton aria-label="Volume">{icons.speaker}</TrayButton>
          <Clock>16:28<br />22/08/2024</Clock>
          <Notices aria-label="Notifications">{icons.note}<Badge>38</Badge></Notices>
        </Tray>
      </Taskbar>
    </Window>
  );
}
